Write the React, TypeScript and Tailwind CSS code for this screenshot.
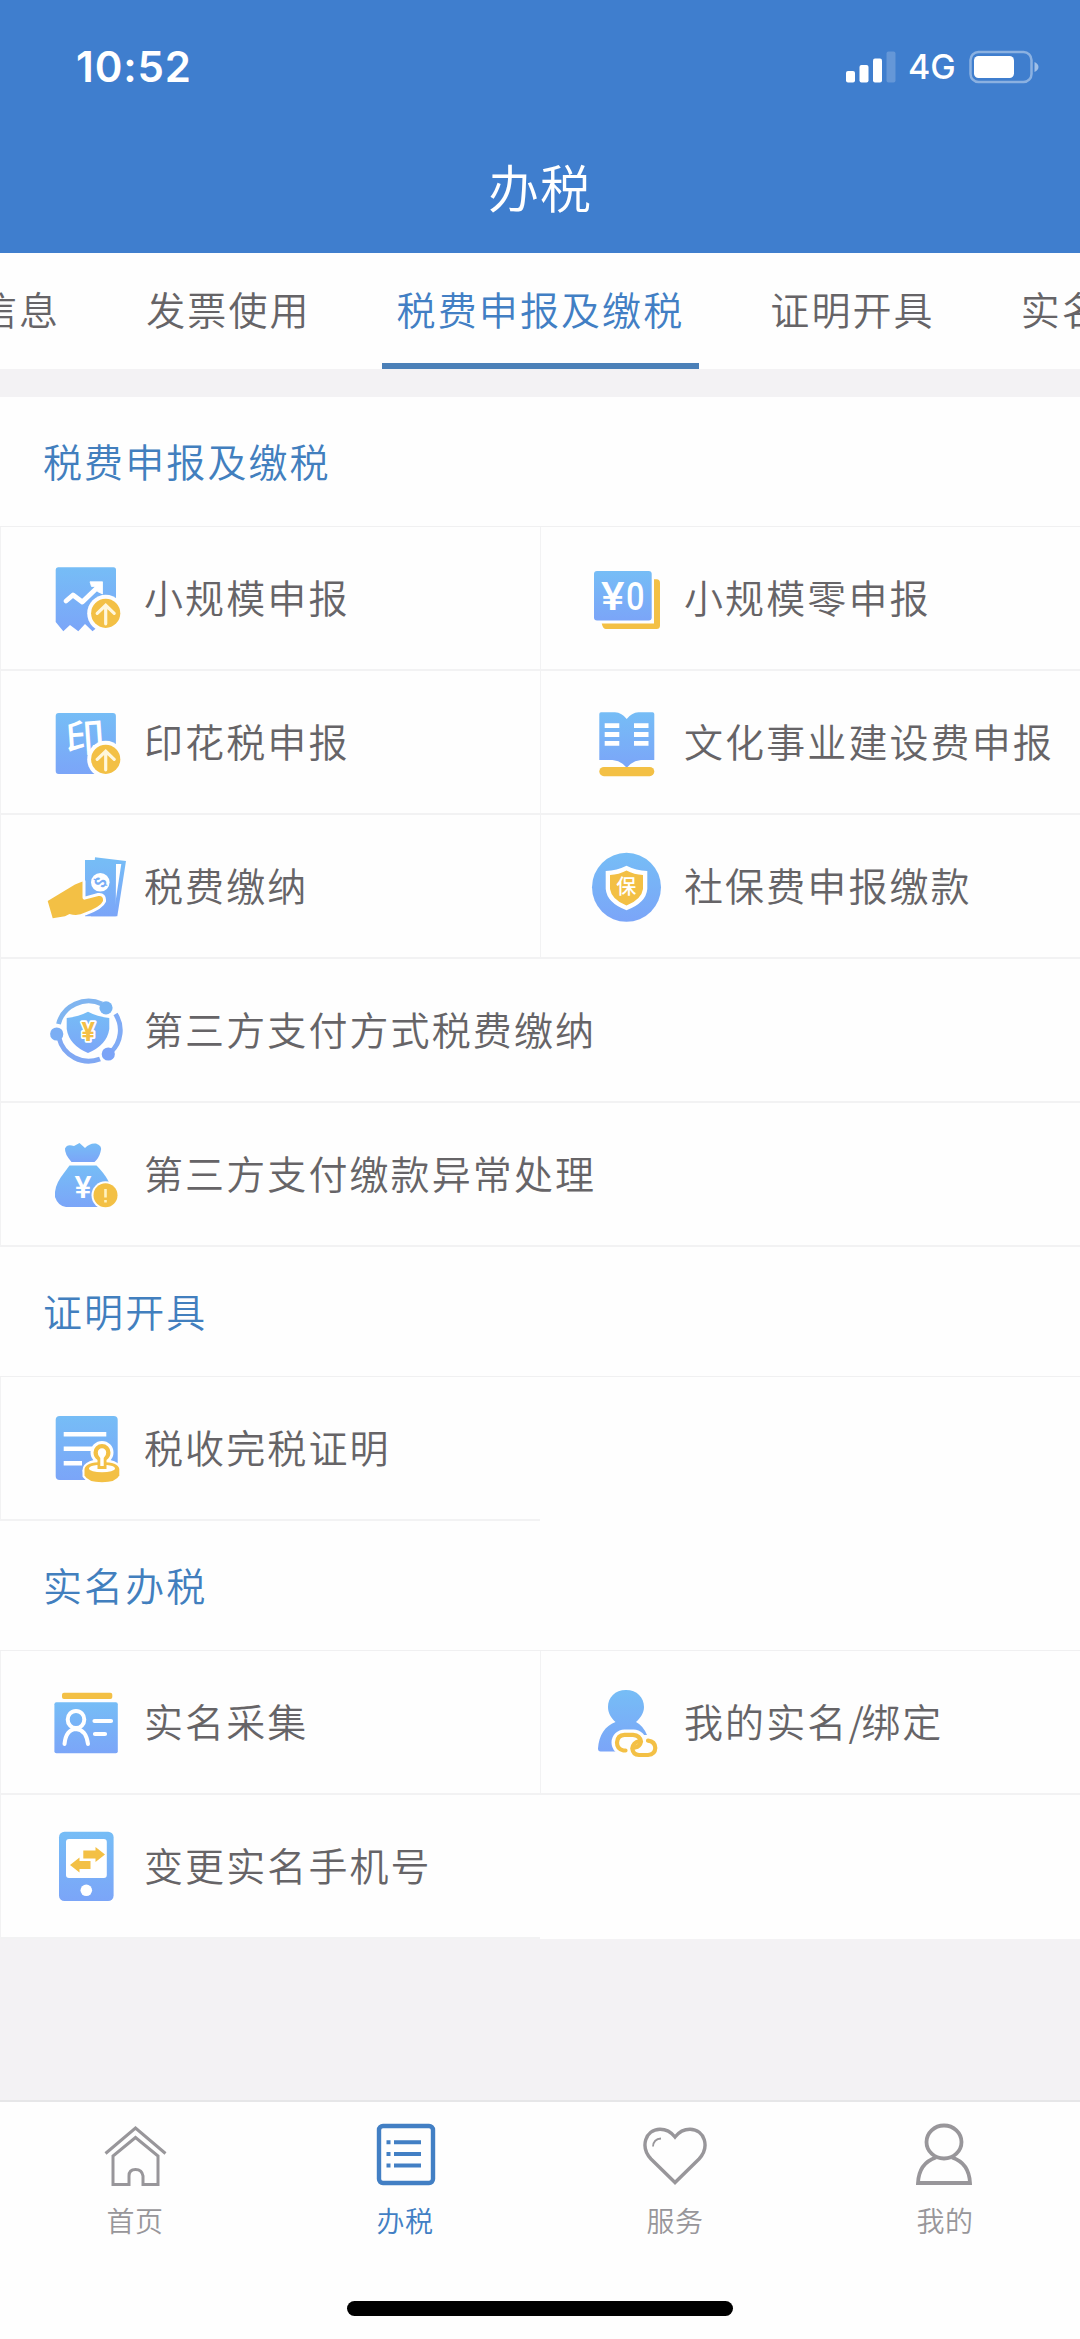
import type { ReactNode } from 'react'

const BLUE = 'url(#iconBlue)'
const GOLD = '#F3C045'

interface Entry {
  label: ReactNode
  icon: ReactNode
  wide?: boolean
}

interface Section {
  title: string
  entries: Entry[]
}

// ── Icons ─────────────────────────────────────────────────────────────────────

function Icon({ children }: { children: ReactNode }) {
  return (
    <svg className="w-20 h-20 flex-shrink-0" viewBox="0 0 80 80" fill="none">
      {children}
    </svg>
  )
}

function UpBadge({ cy }: { cy: number }) {
  return (
    <>
      <circle cx="59.7" cy={cy} r="18.5" fill="#FEFEFE" />
      <circle cx="59.7" cy={cy} r="14.6" fill={GOLD} />
      <path
        transform={`translate(59.7 ${cy})`}
        d="M0 10.5V-8M-8.5 0L0 -8L8.5 0"
        stroke="#FFF7DC"
        strokeWidth="3.2"
        strokeLinecap="round"
      />
    </>
  )
}

const ReportIcon = (
  <Icon>
    <path d="M12 8.3H67.5Q70 8.3 70 10.8V66L62 72L54 66L46.5 72.3L39 65L32.3 72.3L24 66L17.3 72.3L9.7 63V10.8Q9.7 8.3 12 8.3Z" fill={BLUE} />
    <path d="M20 42L27 36L36.3 43L53 27" stroke="#FFF" strokeWidth="4.8" strokeLinecap="round" strokeLinejoin="round" />
    <path d="M44 22.8H56.5V35L51.5 32.5V27.5H45.5Z" fill="#FFF" stroke="#FFF" strokeWidth="0.8" />
    <UpBadge cy={54.3} />
  </Icon>
)

const ZeroReportIcon = (
  <Icon>
    <path d="M68 20.3H70.5Q74 20.3 74 24V66.5Q74 70 70.5 70H20Q17 70 15.7 64.5H68Z" fill={GOLD} />
    <rect x="7" y="11" width="61" height="53" rx="4" fill="#FEFEFE" />
    <rect x="8" y="12" width="57.7" height="49.5" rx="3" fill={BLUE} />
    <text x="15" y="50.5" fontSize="38" textLength="23.5" lengthAdjust="spacingAndGlyphs" className="font-['Roboto',sans-serif] font-medium" fill="#FFF">¥</text>
    <text x="40" y="50.5" fontSize="38" textLength="18.5" lengthAdjust="spacingAndGlyphs" className="font-['Roboto',sans-serif] font-medium" fill="#FFF">0</text>
  </Icon>
)

const StampTaxIcon = (
  <Icon>
    <rect x="9.7" y="10" width="60.2" height="61" rx="3" fill={BLUE} />
    <text x="39" y="49" fontSize="39" textAnchor="middle" transform="rotate(-4 39 34)" className="font-['Noto_Sans_CJK_SC',sans-serif] font-medium" fill="#FFF">印</text>
    <UpBadge cy={56.3} />
  </Icon>
)

const BookIcon = (
  <Icon>
    <path d="M15 9.3H29Q36 9.8 40.7 16Q45.5 9.8 52.5 9.3H66.5Q68.3 9.3 68.3 11V57H55Q46 58 40.7 64.7Q35.5 58 26.5 57H13.3V11Q13.3 9.3 15 9.3Z" fill={BLUE} />
    <path d="M18.7 22.7H33.3M18.7 31.5H33.3M18.7 40.3H33.3M48 22.7H62.5M48 31.5H62.5M48 40.3H62.5" stroke="#FFF" strokeWidth="4.8" />
    <rect x="13.3" y="64" width="55" height="9.2" rx="4.6" fill={GOLD} />
  </Icon>
)

const PayIcon = (
  <Icon>
    <path d="M49 10.3L80 14L71.3 69.3H45Z" fill={BLUE} />
    <path d="M70 17H75.3L69 58Z" fill="#FFF" />
    <path d="M39 13H69.8V69.3H39Z" fill={BLUE} />
    <circle cx="54.3" cy="35.3" r="9.3" fill="#FFF" />
    <text x="54.3" y="41" fontSize="16" textAnchor="middle" transform="rotate(-65 54.3 35.3)" className="font-['Roboto',sans-serif] font-bold" fill="#78ADF5">$</text>
    <path
      d="M1.7 54L29 37.5L36.5 34.5V50.5Q36.500 53 39 52.600L52.500 49Q57.500 48.500 57 54Q55 59.500 39 65.500Q32 69.500 23.500 67L19 69.200L6.700 71.200Z"
      fill={GOLD}
      stroke="#FEFEFE"
      strokeWidth="6"
      paintOrder="stroke"
      strokeLinejoin="round"
    />
  </Icon>
)

const InsuranceIcon = (
  <Icon>
    <circle cx="40.5" cy="40.3" r="34.5" fill={BLUE} />
    <path d="M40.5 18.7Q50 23.5 61.3 24V42Q60 56 40.5 63.2Q21 56 19.7 42V24Q31 23.5 40.5 18.7Z" fill="#FFF" />
    <path d="M40.5 23.5Q48 27.5 57 28V42Q55.5 52.5 40.5 58.6Q25.5 52.5 24 42V28Q33 27.5 40.5 23.5Z" fill={GOLD} />
    <text x="40.3" y="47.2" fontSize="20" textAnchor="middle" className="font-['Noto_Sans_CJK_SC',sans-serif] font-medium" fill="#FFF">保</text>
  </Icon>
)

const ThirdPartyIcon = (
  <Icon>
    <path d="M12.5 33A31 30 0 0 1 56 13" stroke="#80B5F0" strokeWidth="4.8" />
    <path d="M69.5 23A30 30 0 0 1 65 61" stroke="#80ABF5" strokeWidth="4.8" />
    <path d="M54 68A30.5 30 0 0 1 13 47" stroke="#80A8F3" strokeWidth="4.8" />
    <circle cx="60" cy="16.8" r="6.6" fill="#78B4F3" />
    <circle cx="10.7" cy="43" r="6.6" fill="#7BAEF4" />
    <circle cx="62.3" cy="63" r="6.6" fill="#7BA3F7" />
    <path d="M42 20.7Q51 25.5 63.3 27V38Q61 54 42 62Q23 54 20.7 38V27Q33 25.5 42 20.7Z" fill={BLUE} />
    <text x="42.2" y="49.7" fontSize="25" textAnchor="middle" className="font-['Roboto',sans-serif] font-bold" fill={GOLD} stroke="#FFF" strokeWidth="3.5" paintOrder="stroke" strokeLinejoin="round">¥</text>
  </Icon>
)

const MoneyBagIcon = (
  <Icon>
    <path d="M25.5 27Q18.5 19 19 13.5Q21 8.5 28 11L33.5 8L39 13Q44 7.8 50 8.6Q57 11 54.5 17Q53 23 48.5 27Z" fill={BLUE} />
    <path d="M23.5 30.5H50.5Q66 46 66 60Q64 72 56 72H20Q12 71 9 62Q8 52 15 42Z" fill={BLUE} />
    <text x="37" y="63" fontSize="32" textAnchor="middle" className="font-['Roboto',sans-serif] font-medium" fill="#FFF">¥</text>
    <circle cx="59.5" cy="60.3" r="14" fill="#FEFEFE" />
    <circle cx="59.5" cy="60.3" r="12" fill={GOLD} />
    <path d="M59.5 54V62.5M59.5 65V67.5" stroke="#FFF2C0" strokeWidth="2.6" />
  </Icon>
)

const CertificateIcon = (
  <Icon>
    <rect x="9.7" y="7" width="62" height="64" rx="4" fill={BLUE} />
    <path d="M17.7 25.3H60.3M17.7 39.7H46M17.7 54.3H36" stroke="#FFF" strokeWidth="4.6" />
    <g stroke="#FEFEFE" strokeWidth="9" fill="#FEFEFE">
      <circle cx="56" cy="43.5" r="7" />
      <ellipse cx="56" cy="61" rx="15" ry="6.5" />
      <path d="M41 61V66Q45 71.5 56 71.5Q67 71.5 71 66V61" />
    </g>
    <path d="M38.5 60Q40 53 56 53Q72 53 73.3 60V66.5Q70 73.3 56 73.3Q42 73.3 38.5 66.5Z" fill={GOLD} />
    <ellipse cx="56" cy="59.5" rx="13" ry="3.8" fill="#FFF" />
    <path d="M51.5 60V51Q47.5 48 47.5 43.5A8.5 8.5 0 0 1 64.5 43.5Q64.5 48 60.5 51V60Z" fill={GOLD} />
    <path d="M54.3 57V49Q51.5 46.5 51.8 43.5A4.2 4.2 0 0 1 60.2 43.5Q60.5 46.5 57.7 49V57Z" fill="#FFF" />
  </Icon>
)

const IdCollectIcon = (
  <Icon>
    <rect x="16" y="9.7" width="50.3" height="6.3" rx="2" fill={GOLD} />
    <rect x="8.4" y="19.3" width="63.4" height="51" rx="2" fill={BLUE} />
    <ellipse cx="30" cy="36.5" rx="8.3" ry="8.6" stroke="#FFF" strokeWidth="4" />
    <path d="M18.5 61Q20 46.5 30 46Q40 46.5 42 61" stroke="#FFF" strokeWidth="4" strokeLinecap="round" />
    <path d="M48.500 38H65M49 51H59" stroke="#FFF" strokeWidth="4.2" strokeLinecap="round" />
  </Icon>
)

const BindIcon = (
  <Icon>
    <path d="M40 7C51 7 58 14.5 58 24C58 30 54.5 35 50 39Q57 42.5 61 52V68.5H14.5Q12 68.500 12 65.500C13 52 19 43 29.500 39C25 35 22 30 22 24C22 14.500 29 7 40 7Z" fill={BLUE} />
    <g stroke="#FEFEFE" strokeWidth="11" fill="#FEFEFE">
      <rect x="31" y="52" width="24" height="15" rx="7.500" />
      <rect x="46" y="57.500" width="23.500" height="14.500" rx="7.200" />
    </g>
    <g stroke={GOLD} strokeWidth="4.200" strokeLinecap="round">
      <path d="M39.500 67.500H37.500Q31 66 31 59.500Q31.500 52 38.500 51.800H47Q54 52.500 55 58.500Q54 63.500 49 64.500" />
      <path d="M53.500 58Q47 59.500 46.300 65.500Q47 71.700 53 72H62Q69 71.500 69.300 65Q69 58.500 62 57.700" />
    </g>
  </Icon>
)

const PhoneIcon = (
  <Icon>
    <rect x="13" y="4.7" width="54.6" height="69.3" rx="5.5" fill={BLUE} />
    <rect x="20" y="12" width="40.8" height="39" rx="3" fill="#FFF" />
    <circle cx="40.3" cy="63.3" r="5.8" fill="#FFF" />
    <path d="M37.3 23.5H49.5V20L59 27.500L49.500 35V31.500H37.300Z" fill={GOLD} />
    <path d="M44.500 34H33.500V30.500L24 38L33.500 45.500V42H44.500Z" fill={GOLD} />
  </Icon>
)

const HomeIcon = (
  <>
    <path d="M3.5 31.5L33.5 6L63.5 31.5" />
    <path d="M11 62.5V34L33.5 15.5L56 34V62.5H41V54Q40 47.5 33.5 47.5Q27 47.5 27 54V62.5Z" />
  </>
)

const ListIcon = (
  <>
    <rect x="7" y="4" width="54" height="57" rx="4" strokeWidth="4.4" />
    <path d="M22 20.300H49M22 32H49M22 43.500H49" strokeWidth="4" />
    <path d="M14.500 20.300H18.500M14.500 32H18.500M14.500 43.500H18.500" strokeWidth="4" />
  </>
)

const HeartIcon = (
  <>
    <path d="M33 60.5L9 37C-2 25 3 7.5 18 7.2Q27 7.2 33 15Q39 7.2 48 7.2C63 7.5 68 25 57 37Z" strokeWidth="3.4" />
    <path d="M11 24.5Q11.5 17 19 16.5" strokeWidth="1.8" />
  </>
)

const PersonIcon = (
  <>
    <ellipse cx="32" cy="20" rx="17.5" ry="16.5" strokeWidth="3.8" />
    <path d="M24 35.5Q7 41 6 61H58Q57 41 40 35.5" strokeWidth="3.8" />
  </>
)

// ── Data ──────────────────────────────────────────────────────────────────────

const TABS = ['信息', '发票使用', '税费申报及缴税', '证明开具', '实名办税']
const ACTIVE_TAB = '税费申报及缴税'

const SECTIONS: Section[] = [
  {
    title: '税费申报及缴税',
    entries: [
      { label: '小规模申报', icon: ReportIcon },
      { label: '小规模零申报', icon: ZeroReportIcon },
      { label: '印花税申报', icon: StampTaxIcon },
      { label: '文化事业建设费申报', icon: BookIcon },
      { label: '税费缴纳', icon: PayIcon },
      { label: '社保费申报缴款', icon: InsuranceIcon },
      { label: '第三方支付方式税费缴纳', icon: ThirdPartyIcon, wide: true },
      { label: '第三方支付缴款异常处理', icon: MoneyBagIcon, wide: true },
    ],
  },
  {
    title: '证明开具',
    entries: [{ label: '税收完税证明', icon: CertificateIcon }],
  },
  {
    title: '实名办税',
    entries: [
      { label: '实名采集', icon: IdCollectIcon },
      { label: <>我的实名<span className="tracking-[-2.500px]">/</span>绑定</>, icon: BindIcon },
      { label: '变更实名手机号', icon: PhoneIcon },
    ],
  },
]

const NAV = [
  { label: '首页', icon: HomeIcon },
  { label: '办税', icon: ListIcon, active: true },
  { label: '服务', icon: HeartIcon },
  { label: '我的', icon: PersonIcon },
]

// ── Parts ─────────────────────────────────────────────────────────────────────

function StatusBar() {
  return (
    <div className="h-[133px] pl-[76px] pr-[41px] flex items-center justify-between text-white">
      <span className="font-['Inter',sans-serif] font-semibold text-[42px] leading-none tracking-[0.9px]">10:52</span>
      <div className="flex items-center">
        <svg width="51" height="32" viewBox="0 0 51 32" fill="#FFF">
          <rect x="0" y="20" width="9" height="11.5" rx="2" />
          <rect x="13.5" y="14" width="9" height="17.5" rx="2" />
          <rect x="27" y="7.5" width="9" height="24" rx="2" />
          <rect x="40.5" y="0.5" width="9" height="31" rx="2" opacity="0.2" />
        </svg>
        <span className="ml-[11px] w-[50px] font-['Inter',sans-serif] font-medium text-[34px] leading-none">4G</span>
        <svg className="ml-[11px]" width="70" height="34" viewBox="0 0 70 34">
          <rect x="1.5" y="2" width="61" height="30" rx="8" fill="none" stroke="#FFF" strokeOpacity="0.4" strokeWidth="2.5" />
          <rect x="5" y="6" width="40" height="22" rx="4.5" fill="#FFF" />
          <path d="M65.5 12Q69.5 14 69.5 17Q69.5 20 65.5 22Z" fill="#FFF" fillOpacity="0.5" />
        </svg>
      </div>
    </div>
  )
}

function EntryGrid({ entries }: { entries: Entry[] }) {
  return (
    <div className="grid grid-cols-2 border-t border-[#F0F0F1]">
      {entries.map((e, i) => (
        <div
          key={i}
          className={`h-36 pl-[45px] pt-[2px] flex items-center border-l border-b-2 border-[#F2F2F3] ${e.wide ? 'col-span-2' : ''}`}
        >
          {e.icon}
          <span className="ml-[18px] mb-[5px] text-[39px] leading-none tracking-[2.1px] text-[#666467] whitespace-nowrap">
            {e.label}
          </span>
        </div>
      ))}
    </div>
  )
}

export default function App() {
  return (
    <div className="w-[1080px] h-[2339px] flex flex-col overflow-hidden bg-[#F3F2F4] font-['Noto_Sans_CJK_SC',sans-serif] font-[350]">
      {/* Shared gradient for the blue icon shapes */}
      <svg className="absolute w-0 h-0">
        <defs>
          <linearGradient id="iconBlue" x1="0" y1="0" x2="0" y2="1">
            <stop offset="0" stopColor="#76BDF6" />
            <stop offset="1" stopColor="#7BA5F8" />
          </linearGradient>
        </defs>
      </svg>

      {/* Header */}
      <header className="h-[253px] flex-shrink-0 bg-[#3F7ECE]">
        <StatusBar />
        <h1 className="pt-[28px] text-center text-[51px] leading-none tracking-[1px] text-white">办税</h1>
      </header>

      {/* Tabs */}
      <nav className="h-[116px] flex-shrink-0 flex gap-[56px] overflow-hidden bg-[#FEFEFE]">
        {TABS.map(tab => (
          <div
            key={tab}
            className={`flex-shrink-0 px-[15px] pt-[36px] text-[39px] leading-none tracking-[2.1px] whitespace-nowrap first:-ml-[37px] ${
              tab === ACTIVE_TAB ? 'text-[#427FC4] border-b-[6px] border-[#4B80B8]' : 'text-[#666467]'
            }`}
          >
            {tab}
          </div>
        ))}
      </nav>

      {/* Services */}
      <main className="mt-7 bg-[#FEFEFE]">
        {SECTIONS.map(s => (
          <section key={s.title}>
            <h2 className="h-[129px] pl-[43px] pb-[3px] flex items-center text-[39px] leading-none tracking-[2.1px] text-[#427FBE]">
              {s.title}
            </h2>
            <EntryGrid entries={s.entries} />
          </section>
        ))}
      </main>

      {/* Bottom navigation */}
      <footer className="mt-auto h-[239px] flex-shrink-0 flex flex-col items-center bg-[#FEFEFE] border-t-2 border-[#E6E6E8]">
        <div className="w-full grid grid-cols-4 pt-5">
          {NAV.map(n => (
            <div key={n.label} className={`flex flex-col items-center ${n.active ? 'text-[#427FC4]' : 'text-[#98969A]'}`}>
              <svg width="66" height="66" viewBox="0 0 66 66" fill="none" stroke="currentColor" strokeWidth="3">
                {n.icon}
              </svg>
              <span className="mt-[18px] text-[28px] leading-none tracking-[0.6px]">{n.label}</span>
            </div>
          ))}
        </div>
        <div className="mt-auto mb-[23px] w-[386px] h-[15px] rounded-full bg-black" />
      </footer>
    </div>
  )
}
